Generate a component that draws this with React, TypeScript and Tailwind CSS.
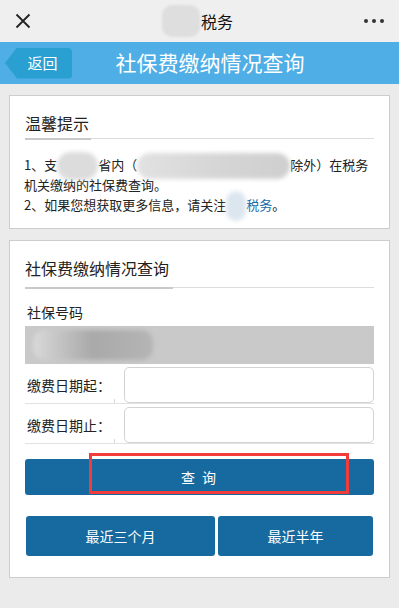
import React from 'react'

const font = { fontFamily: '"Noto Sans CJK SC", "Noto Sans", sans-serif' }

function Blob({ w, h, className }: { w: number; h: number; className: string }) {
  return (
    <span className="relative inline-block align-middle" style={{ width: w, height: 14 }}>
      <span
        className={`absolute left-0 top-1/2 -translate-y-1/2 rounded-full blur-[2px] ${className}`}
        style={{ width: w, height: h }}
      />
    </span>
  )
}

function TopBar() {
  return (
    <div className="flex h-[42px] items-center justify-between bg-[#efefef] px-[15px]">
      <svg width="16" height="16" viewBox="0 0 16 16" className="text-[#222]">
        <path d="M1.5 1.5L14.5 14.5M14.5 1.5L1.5 14.5" stroke="currentColor" strokeWidth="1.8" />
      </svg>
      <div className="flex items-center">
        <span className="mr-[1px] h-[32px] w-[38px] rounded-[10px] bg-[#dedede] blur-[1px]" />
        <span className="text-[16px] text-[#111]">税务</span>
      </div>
      <div className="flex gap-[4px]">
        <span className="h-[4px] w-[4px] rounded-full bg-[#333]" />
        <span className="h-[4px] w-[4px] rounded-full bg-[#333]" />
        <span className="h-[4px] w-[4px] rounded-full bg-[#333]" />
      </div>
    </div>
  )
}

function Header() {
  return (
    <div className="flex h-[42px] items-center bg-[#4faee6] pl-[5px]">
      <div className="flex h-[31px] w-[67px] items-center justify-center rounded-r-[4px] bg-[#2aa0d2] pl-[8px] text-[15px] text-white [clip-path:polygon(12px_0,100%_0,100%_100%,12px_100%,0_50%)]">
        返回
      </div>
      <div className="flex-1 pr-[51px] text-center text-[21px] text-white">社保费缴纳情况查询</div>
    </div>
  )
}

function CardTitle({ title, underline, gap }: { title: string; underline: number; gap: number }) {
  return (
    <div className="mx-[15px]">
      <div className="text-[16px] leading-[24px] text-[#222]">{title}</div>
      <div className="flex h-[2px] items-start" style={{ marginTop: gap }}>
        <div className="h-[2px] bg-[#c9c9c9]" style={{ width: underline }} />
        <div className="h-[1px] flex-1 bg-[#dcdcdc]" />
      </div>
    </div>
  )
}

function DateRow({ label }: { label: string }) {
  return (
    <div className="relative flex h-[40px] items-start border-b border-[#e2e2e2] pt-[3px]">
      <div className="w-[99px] pl-[2px] pt-[8px] text-[14px] leading-[20px] text-[#222]">{label}</div>
      <div className="h-[36px] flex-1 rounded-[5px] border border-[#d2d2d2] bg-white" />
      <span className="absolute bottom-0 left-[89px] h-[4px] w-[1px] bg-[#d8d8d8]" />
    </div>
  )
}

export default function App() {
  return (
    <div className="min-h-[608px] w-[399px] bg-[#ebebeb]" style={font}>
      <TopBar />
      <Header />
      <div className="px-[9px] pt-[11px]">
        <div className="h-[134px] border border-[#cdcdcd] bg-white pt-[15px]">
          <CardTitle title="温馨提示" underline={66} gap={3} />
          <div className="mx-[14px] mt-[15px] text-[13px] leading-[20px] text-[#222]">
            <div className="whitespace-nowrap">
              1、支<Blob w={41} h={28} className="bg-[#dcdcdc]" />省内（
              <Blob w={153} h={26} className="bg-gradient-to-r from-[#e2e2e2] via-[#d6d6d6] to-[#cfcfcf]" />
              除外）在税务
            </div>
            <div>机关缴纳的社保费查询。</div>
            <div className="whitespace-nowrap">
              2、如果您想获取更多信息，请关注
              <Blob w={20} h={30} className="bg-[#dce6ef]" />
              <span className="text-[#1a6aa8]">税务</span>。
            </div>
          </div>
        </div>

        <div className="mt-[11px] border border-[#cdcdcd] bg-white pb-[21px] pt-[15px]">
          <CardTitle title="社保费缴纳情况查询" underline={148} gap={7} />
          <div className="mx-[15px] mt-[13px]">
            <div className="pl-[2px] text-[14px] leading-[20px] text-[#222]">社保号码</div>
            <div className="mt-[4px] flex h-[38px] items-center bg-[#c9c9c9] pl-[8px]">
              <span className="h-[30px] w-[120px] rounded-[12px] bg-gradient-to-r from-[#d9d9d9] via-[#a9a9a9] to-[#b5b5b5] blur-[2px]" />
            </div>
            <DateRow label="缴费日期起：" />
            <DateRow label="缴费日期止：" />
            <div className="relative mt-[15px]">
              <button className="flex h-[36px] w-full items-center justify-center rounded-[3px] bg-[#166a9f] text-[14px] tracking-[2px] text-white">
                查 询
              </button>
              <span className="pointer-events-none absolute left-[64px] top-[-6px] h-[41px] w-[260px] border-[3px] border-[#f23b3b]" />
            </div>
            <div className="mt-[21px] flex gap-[3px] px-[1px]">
              <button className="h-[40px] flex-1 rounded-[3px] bg-[#166a9f] text-[14px] text-white">最近三个月</button>
              <button className="h-[40px] w-[155px] rounded-[3px] bg-[#166a9f] text-[14px] text-white">最近半年</button>
            </div>
          </div>
        </div>
      </div>
    </div>
  )
}
